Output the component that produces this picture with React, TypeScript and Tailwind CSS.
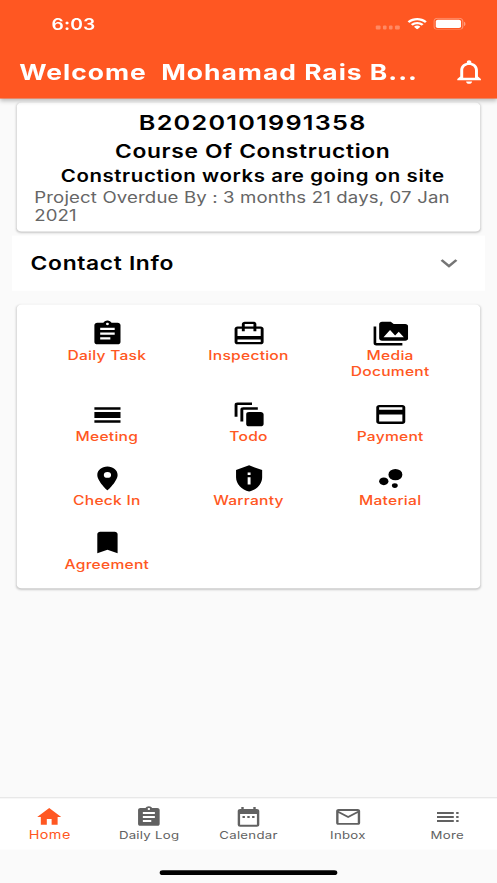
import {
  MdAssignment,
  MdAutoAwesomeMotion,
  MdBookmark,
  MdBubbleChart,
  MdCalendarViewDay,
  MdCardTravel,
  MdDateRange,
  MdExpandMore,
  MdHome,
  MdLocationOn,
  MdMailOutline,
  MdNotificationsNone,
  MdPayment,
  MdPermMedia,
  MdPrivacyTip,
  MdToc,
} from "react-icons/md";

const ACTIONS = [
  { icon: MdAssignment, label: "Daily Task" },
  { icon: MdCardTravel, label: "Inspection" },
  { icon: MdPermMedia, label: "Media Document" },
  { icon: MdCalendarViewDay, label: "Meeting" },
  { icon: MdAutoAwesomeMotion, label: "Todo" },
  { icon: MdPayment, label: "Payment" },
  { icon: MdLocationOn, label: "Check In" },
  { icon: MdPrivacyTip, label: "Warranty" },
  { icon: MdBubbleChart, label: "Material" },
  { icon: MdBookmark, label: "Agreement" },
];

const TABS = [
  { icon: MdHome, label: "Home", active: true },
  { icon: MdAssignment, label: "Daily Log" },
  { icon: MdDateRange, label: "Calendar" },
  { icon: MdMailOutline, label: "Inbox" },
  { icon: MdToc, label: "More" },
];

function StatusBar() {
  return (
    <div className="flex h-[44px] items-center pr-[26px] pl-[43px] pt-[4px]">
      <span className="text-[16px] font-semibold tracking-[0.1px]">6:03</span>
      <div className="ml-auto flex items-center">
        <div className="mt-[8px] flex gap-[2.1px]">
          {[0, 1, 2, 3].map((i) => (
            <span key={i} className="h-[3.4px] w-[3.2px] rounded-[1px] bg-white/30" />
          ))}
        </div>
        <svg className="ml-[6px] h-[12.5px] w-[17px]" viewBox="0 0 16 12" fill="white" preserveAspectRatio="none">
          <path d="M8 2.5c2.2 0 4.3.9 5.9 2.4.1.1.3.1.4 0l1.1-1.2c.1-.1.1-.3 0-.4C11.3-.6 4.7-.6.6 3.3c-.1.1-.1.3 0 .4l1.1 1.2c.1.1.3.1.4 0C3.7 3.4 5.8 2.5 8 2.5z" />
          <path d="M8 6.3c1.2 0 2.4.5 3.3 1.3.1.1.3.1.4 0l1.2-1.2c.1-.1.1-.3 0-.4-2.7-2.6-7-2.6-9.7 0-.1.1-.1.3 0 .4l1.1 1.2c.1.1.3.1.4 0C5.6 6.8 6.8 6.3 8 6.3z" />
          <path d="M10.3 8.9c.1-.1.1-.3 0-.4-1.3-1.1-3.3-1.1-4.6 0-.1.1-.1.3 0 .4l2.1 2.2c.1.1.3.1.4 0z" />
        </svg>
        <svg className="ml-[5.5px] h-[12.5px] w-[27px]" viewBox="0 0 27 12" fill="none" preserveAspectRatio="none">
          <rect x="0.5" y="0.5" width="24" height="11" rx="3" stroke="white" strokeOpacity="0.35" />
          <rect x="2" y="2" width="21" height="8" rx="1.6" fill="white" />
          <path d="M25.5 4v4c.8-.3 1.3-1.1 1.3-2s-.5-1.7-1.3-2z" fill="white" fillOpacity="0.4" />
        </svg>
      </div>
    </div>
  );
}

function Header() {
  return (
    <header className="relative h-[100px] bg-[#ff5722] text-white shadow-[0_2px_4px_rgba(0,0,0,0.25)]">
      <StatusBar />
      <div className="flex h-[56px] items-center justify-between pt-[1px] pr-[8.5px] pl-[16px]">
        <h1 className="pt-[2px] whitespace-pre text-[22px] font-bold tracking-[0.83px]">
          {"Welcome  Mohamad Rais B..."}
        </h1>
        <MdNotificationsNone className="size-[29.5px]" />
      </div>
    </header>
  );
}

function ProjectCard() {
  return (
    <section className="mx-[14px] mt-[4px] h-[131px] rounded-[4px] bg-white pt-[6px] text-black shadow-[0_1px_2px_rgba(0,0,0,0.2)]">
      <div className="pl-[7px] text-center font-semibold">
        <h2 className="text-[21px] leading-[29px] tracking-[1.05px]">B2020101991358</h2>
        <p className="text-[19px] leading-[29px] tracking-[0.55px]">Course Of Construction</p>
        <p className="text-[17px] leading-[22px] tracking-[0.5px]">Construction works are going on site</p>
      </div>
      <p className="mt-[2px] pr-[18px] pl-[14.5px] text-[15.5px] leading-[18px] tracking-[0.12px] text-[#666]">
        Project Overdue By : 3 months 21 days, 07 Jan 2021
      </p>
    </section>
  );
}

function ContactInfo() {
  return (
    <section className="mx-[10px] mt-[4px] flex h-[56px] items-center justify-between bg-white pr-[16px] pl-[15.5px]">
      <h2 className="pt-[2px] text-[19px] font-semibold tracking-[0.55px] text-black">Contact Info</h2>
      <MdExpandMore className="size-[28px] text-[#757575]" />
    </section>
  );
}

function ActionGrid() {
  return (
    <section className="mx-[14px] mt-[14px] grid h-[288px] grid-cols-3 content-start gap-y-[20.7px] rounded-[4px] bg-white px-[16px] pt-[15px] shadow-[0_1px_2px_rgba(0,0,0,0.2)]">
      {ACTIONS.map(({ icon: Icon, label }) => (
        <button key={label} className="flex flex-col items-center px-[20px]">
          <Icon className="size-[29px] text-black" />
          <span className="-mt-[1px] text-[13px] leading-[16.5px] font-medium tracking-[0.2px] text-[#ff5722]">
            {label}
          </span>
        </button>
      ))}
    </section>
  );
}

function BottomNav() {
  return (
    <nav className="mt-auto grid h-[53.5px] grid-cols-5 border-t border-[#e0e0e0] bg-white">
      {TABS.map(({ icon: Icon, label, active }) => (
        <button
          key={label}
          className={`flex flex-col items-center pt-[7px] ${active ? "text-[#ff5722]" : "text-[#616161]"}`}
        >
          <Icon className="size-[24px]" />
          <span
            className={`-mt-[0.5px] leading-[14px] ${active ? "text-[12px] tracking-[0.35px]" : "text-[11px] tracking-[0.22px]"}`}
          >
            {label}
          </span>
        </button>
      ))}
    </nav>
  );
}

export default function App() {
  return (
    <div className="h-[883px] w-[497px] overflow-hidden">
      {/* 414x896 device canvas stretched to the window */}
      <div className="flex h-[896px] w-[414px] origin-top-left scale-x-[1.2005] scale-y-[0.9855] flex-col bg-[#fafafa] font-[Inter,'Liberation_Sans',sans-serif]">
        <Header />
        <ProjectCard />
        <ContactInfo />
        <ActionGrid />
        <BottomNav />
        <div className="flex h-[34px] shrink-0 justify-center pt-[21px]">
          <div className="h-[5px] w-[148px] rounded-full bg-black" />
        </div>
      </div>
    </div>
  );
}
